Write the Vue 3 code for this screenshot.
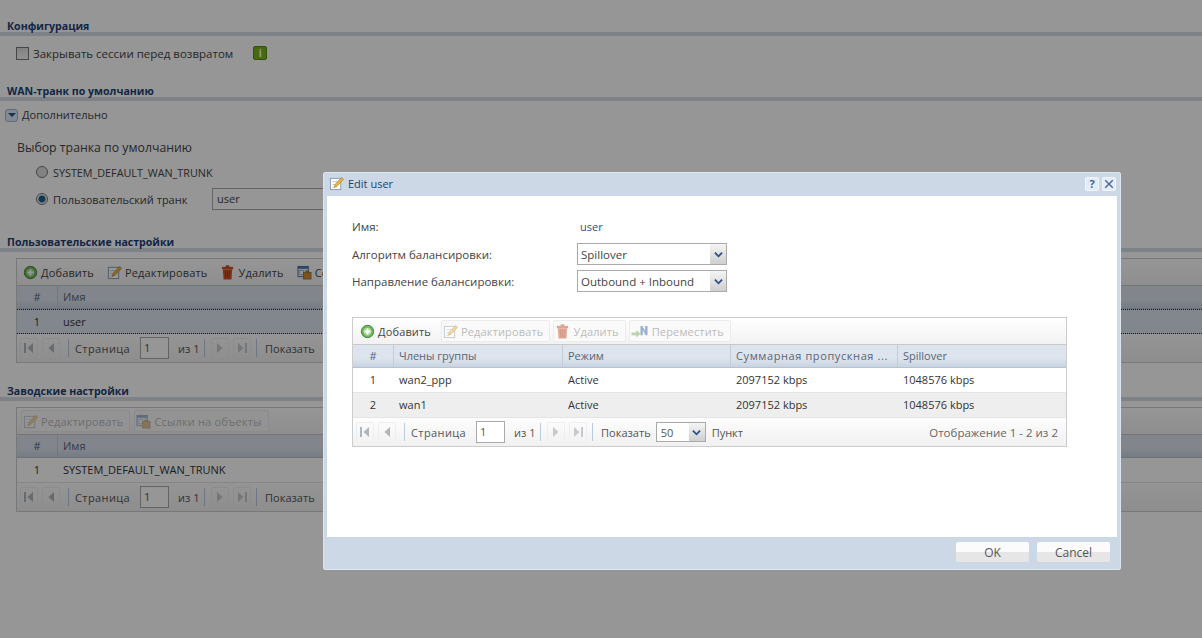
<script setup>
const modalColumns = ['Члены группы', 'Режим', 'Суммарная пропускная ...', 'Spillover']
const modalRows = [
  { id: 1, name: 'wan2_ppp', mode: 'Active', total: '2097152 kbps', spill: '1048576 kbps' },
  { id: 2, name: 'wan1', mode: 'Active', total: '2097152 kbps', spill: '1048576 kbps' }
]
</script>

<template>
  <div class="page">
    <svg class="defs" width="0" height="0">
      <symbol id="i-add" viewBox="0 0 16 16">
        <circle cx="8" cy="8" r="6.6" fill="#6fb05a" stroke="#3f8a3a" />
        <circle cx="8" cy="8" r="4.4" fill="#a5d68d" />
        <path d="M8 4.8v6.4M4.8 8h6.4" stroke="#fff" stroke-width="2" />
      </symbol>
      <symbol id="i-edit" viewBox="0 0 16 16">
        <rect x="1.5" y="2.5" width="11" height="12" fill="#fff" stroke="#8a9ab0" />
        <path d="M3.5 6h6M3.5 9h4M3.5 12h3" stroke="#c0c8d2" />
        <path d="M13.5 1.5l2 2-7 7.5-3 1 1-3z" fill="#edb53e" stroke="#a9791d" stroke-width=".7" />
      </symbol>
      <symbol id="i-del" viewBox="0 0 16 16">
        <path d="M6 0.500h4v1.500H6z" fill="#a33c1c" />
        <rect x="2" y="2" width="12" height="2.500" fill="#c9512a" />
        <path d="M3 4.500h10l-.8 11H3.800z" fill="#d4542a" />
        <path d="M6 6v8M8 6v8M10 6v8" stroke="#a33c1c" />
      </symbol>
      <symbol id="i-ref" viewBox="0 0 16 16">
        <rect x="1" y="1.5" width="11" height="11" fill="#dfe8f4" stroke="#4c72a8" />
        <rect x="1" y="1.5" width="11" height="2.5" fill="#4c72a8" />
        <rect x="3" y="6" width="4" height="4" fill="#fff" stroke="#8aa0c0" stroke-width=".7" />
        <rect x="7" y="8" width="8" height="7" fill="#cf8e35" stroke="#8f5f1d" stroke-width=".7" />
        <path d="M9.5 8V6.5h3V8" fill="none" stroke="#8f5f1d" />
      </symbol>
      <symbol id="i-move" viewBox="0 0 18 16">
        <path d="M0 9h5V6.500l4.500 4-4.500 4V12H0z" fill="#76b25a" />
        <path d="M9.500 2h2l3 5.500V2H17v10h-2l-3-5.500V12H9.500z" fill="#3d66a6" />
      </symbol>
      <symbol id="i-first" viewBox="0 0 14 14">
        <rect x="2" y="2" width="2" height="10" fill="#aeb6bd" />
        <path d="M11 2v10L5.500 7z" fill="#aeb6bd" />
      </symbol>
      <symbol id="i-prev" viewBox="0 0 14 14">
        <path d="M10 2v10L4.500 7z" fill="#aeb6bd" />
      </symbol>
      <symbol id="i-next" viewBox="0 0 14 14">
        <path d="M4 2v10l5.500-5z" fill="#c4cad0" />
      </symbol>
      <symbol id="i-last" viewBox="0 0 14 14">
        <path d="M3 2v10l5.500-5z" fill="#c4cad0" />
        <rect x="10" y="2" width="2" height="10" fill="#c4cad0" />
      </symbol>
    </svg>

    <main class="back">
      <h2 class="section-title first">Конфигурация</h2>
      <div class="check-row">
        <span class="checkbox"></span>
        <span>Закрывать сессии перед возвратом</span>
        <span class="info">i</span>
      </div>

      <h2 class="section-title wan">WAN-транк по умолчанию</h2>
      <div class="advanced">
        <span class="adv-btn"><i></i></span>
        <span class="adv-text">Дополнительно</span>
      </div>
      <div class="choose">Выбор транка по умолчанию</div>
      <div class="radio-row top">
        <span class="radio"></span>
        <span class="trunk">SYSTEM_DEFAULT_WAN_TRUNK</span>
      </div>
      <div class="radio-row">
        <span class="radio on"></span>
        <span class="radio-label">Пользовательский транк</span>
        <span class="text-input">user</span>
      </div>

      <h2 class="section-title user">Пользовательские настройки</h2>
      <section class="back-grid">
        <div class="toolbar">
          <span class="tool"><svg><use href="#i-add" /></svg>Добавить</span>
          <span class="tool"><svg><use href="#i-edit" /></svg>Редактировать</span>
          <span class="tool"><svg><use href="#i-del" /></svg>Удалить</span>
          <span class="tool"><svg><use href="#i-ref" /></svg>Ссылки на объекты</span>
        </div>
        <div class="head back-cols">
          <span class="num">#</span>
          <span>Имя</span>
        </div>
        <div class="row back-cols selected">
          <span class="num">1</span>
          <span>user</span>
        </div>
        <div class="pager">
          <span class="pg"><svg><use href="#i-first" /></svg></span>
          <span class="pg"><svg><use href="#i-prev" /></svg></span>
          <span class="sep"></span>
          <span class="pg-page">Страница</span>
          <span class="pg-input">1</span>
          <span class="pg-of">из 1</span>
          <span class="sep after-of"></span>
          <span class="pg"><svg><use href="#i-next" /></svg></span>
          <span class="pg"><svg><use href="#i-last" /></svg></span>
          <span class="sep tight"></span>
          <span class="pg-text">Показать</span>
        </div>
      </section>

      <h2 class="section-title factory">Заводские настройки</h2>
      <section class="back-grid">
        <div class="toolbar">
          <span class="tool boxed off"><svg><use href="#i-edit" /></svg>Редактировать</span>
          <span class="tool boxed off"><svg><use href="#i-ref" /></svg>Ссылки на объекты</span>
        </div>
        <div class="head back-cols">
          <span class="num">#</span>
          <span>Имя</span>
        </div>
        <div class="row back-cols">
          <span class="num">1</span>
          <span>SYSTEM_DEFAULT_WAN_TRUNK</span>
        </div>
        <div class="pager">
          <span class="pg"><svg><use href="#i-first" /></svg></span>
          <span class="pg"><svg><use href="#i-prev" /></svg></span>
          <span class="sep"></span>
          <span class="pg-page">Страница</span>
          <span class="pg-input">1</span>
          <span class="pg-of">из 1</span>
          <span class="sep after-of"></span>
          <span class="pg"><svg><use href="#i-next" /></svg></span>
          <span class="pg"><svg><use href="#i-last" /></svg></span>
          <span class="sep tight"></span>
          <span class="pg-text">Показать</span>
        </div>
      </section>
    </main>

    <div class="overlay"></div>

    <div class="modal">
      <header class="modal-title">
        <svg class="title-icon"><use href="#i-edit" /></svg>
        <span class="title-text">Edit user</span>
        <span class="win-btn help">?</span>
        <span class="win-btn close">
          <svg viewBox="0 0 12 12"><path d="M1.500 1.500l9 9M10.500 1.500l-9 9" stroke="#3f6495" stroke-width="1.600" /></svg>
        </span>
      </header>

      <div class="modal-body">
        <div class="form-row name">
          <label>Имя:</label>
          <span class="value">user</span>
        </div>
        <div class="form-row algo">
          <label>Алгоритм балансировки:</label>
          <span class="select">
            <span class="select-text">Spillover</span>
            <span class="select-arrow"><svg viewBox="0 0 10 10"><path d="M1 3l4 4 4-4" fill="none" stroke="#27508c" stroke-width="2" /></svg></span>
          </span>
        </div>
        <div class="form-row dir">
          <label>Направление балансировки:</label>
          <span class="select">
            <span class="select-text">Outbound + Inbound</span>
            <span class="select-arrow"><svg viewBox="0 0 10 10"><path d="M1 3l4 4 4-4" fill="none" stroke="#27508c" stroke-width="2" /></svg></span>
          </span>
        </div>

        <section class="grid">
          <div class="toolbar">
            <span class="tool"><svg><use href="#i-add" /></svg>Добавить</span>
            <span class="tool boxed off"><svg><use href="#i-edit" /></svg>Редактировать</span>
            <span class="tool boxed off"><svg><use href="#i-del" /></svg>Удалить</span>
            <span class="tool boxed off wide"><svg><use href="#i-move" /></svg>Переместить</span>
          </div>
          <div class="head cols">
            <span class="num">#</span>
            <span v-for="col in modalColumns" :key="col">{{ col }}</span>
          </div>
          <div v-for="r in modalRows" :key="r.id" class="row cols" :class="{ alt: r.id === 2 }">
            <span class="num">{{ r.id }}</span>
            <span>{{ r.name }}</span>
            <span>{{ r.mode }}</span>
            <span>{{ r.total }}</span>
            <span>{{ r.spill }}</span>
          </div>
          <div class="pager">
            <span class="pg"><svg><use href="#i-first" /></svg></span>
            <span class="pg"><svg><use href="#i-prev" /></svg></span>
            <span class="sep"></span>
            <span class="pg-page">Страница</span>
            <span class="pg-input">1</span>
            <span class="pg-of">из 1</span>
            <span class="sep after-of"></span>
            <span class="pg"><svg><use href="#i-next" /></svg></span>
            <span class="pg"><svg><use href="#i-last" /></svg></span>
            <span class="sep tight"></span>
            <span class="pg-text">Показать</span>
            <span class="mini-select">
              <span>50</span>
              <span class="select-arrow"><svg viewBox="0 0 10 10"><path d="M1 3l4 4 4-4" fill="none" stroke="#27508c" stroke-width="2" /></svg></span>
            </span>
            <span class="pg-text">Пункт</span>
            <span class="pg-total">Отображение 1 - 2 из 2</span>
          </div>
        </section>
      </div>

      <footer class="modal-foot">
        <button class="btn">OK</button>
        <button class="btn">Cancel</button>
      </footer>
    </div>
  </div>
</template>

<style>
html, body {
  margin: 0;
  background: #fff;
}
</style>

<style scoped>
.page {
  position: relative;
  width: 1202px;
  height: 638px;
  overflow: hidden;
  background: #fff;
  font-family: "Open Sans", "Noto Sans", "DejaVu Sans", sans-serif;
  font-size: 11px;
  color: #444;
}

.defs {
  position: absolute;
}

.back {
  display: flow-root;
}

.section-title {
  margin: 0;
  padding: 0 0 0 7px;
  height: 14px;
  line-height: 17px;
  font-size: 10.6px;
  font-weight: 700;
  color: #1d3f73;
  border-bottom: 4px solid #d6dbe4;
  box-sizing: content-box;
}

.first { margin-top: 18px; }
.wan { margin-top: 22px; }
.user { margin-top: 24px; }
.factory { margin-top: 20px; }

.check-row {
  display: flex;
  align-items: center;
  height: 16px;
  margin-top: 9px;
  padding-left: 16px;
  font-size: 11.5px;
}

.checkbox {
  width: 11px;
  height: 11px;
  margin-right: 4px;
  border: 1px solid #777;
  background: linear-gradient(#ddd, #f6f6f6);
}

.info {
  width: 14px;
  height: 14px;
  margin-left: 20px;
  border-radius: 2px;
  background: #7ab51d;
  border: 1px solid #5c8c12;
  box-sizing: border-box;
  color: #fff;
  font-weight: 700;
  font-size: 10px;
  line-height: 12px;
  text-align: center;
}

.advanced {
  display: flex;
  align-items: center;
  height: 14px;
  margin-top: 7px;
  padding-left: 5px;
  gap: 4px;
}

.adv-text {
  line-height: 14px;
  height: 14px;
}

.adv-btn {
  display: flex;
  align-items: center;
  justify-content: center;
  width: 13px;
  height: 13px;
  box-sizing: border-box;
  border: 1px solid #9db4d4;
  border-radius: 3px;
  background: #dfe9f6;
}

.adv-btn i {
  width: 0;
  height: 0;
  border-left: 4px solid transparent;
  border-right: 4px solid transparent;
  border-top: 4px solid #27508c;
}

.choose {
  margin-top: 18px;
  padding-left: 17px;
  font-size: 12.3px;
  line-height: 16px;
}

.radio-row {
  display: flex;
  align-items: center;
  height: 22px;
  padding-left: 36px;
}

.radio-row.top {
  margin-top: 5px;
  margin-bottom: 5px;
}

.trunk {
  font-size: 10.8px;
}

.radio {
  width: 10px;
  height: 10px;
  margin-right: 5px;
  border-radius: 50%;
  border: 1px solid #777;
  background: #ddd;
}

.radio.on {
  background: radial-gradient(circle, #1c5f8f 0 3px, #eee 4px);
}

.radio-label {
  width: 159px;
}

.text-input {
  width: 300px;
  height: 20px;
  line-height: 20px;
  padding-left: 4px;
  border: 1px solid #aaa;
  background: #fff;
}

.back-grid {
  margin: 6px 0 0 16px;
  border: 1px solid #ccc;
  border-right: 0;
}

.back-cols {
  display: grid;
  grid-template-columns: 40px 1fr;
}

.toolbar {
  display: flex;
  align-items: center;
  gap: 3px;
  height: 26px;
  padding-left: 5px;
  background: linear-gradient(#fff, #f2f2f2);
}

.back-grid .toolbar {
  gap: 4px;
  padding-left: 4px;
}

.tool {
  display: flex;
  align-items: center;
  gap: 3px;
  height: 20px;
  padding: 0 6px 0 1px;
  border: 1px solid transparent;
  white-space: nowrap;
  letter-spacing: 0.15px;
}

.tool svg {
  width: 15px;
  height: 15px;
  flex: none;
}

.tool.wide svg {
  width: 18px;
}

.tool.boxed {
  border-color: #ececec;
  border-radius: 2px;
  background: #fafafa;
}

.tool.off {
  color: #bbb;
}

.tool.off svg {
  opacity: 0.5;
}

.head {
  align-items: center;
  height: 24px;
  background: linear-gradient(#dde4ee 0 60%, #c9d3e0);
  border-top: 1px solid #c8c8c8;
  border-bottom: 1px solid #b7c2d2;
  box-sizing: border-box;
  color: #5a6472;
}

.head span {
  height: 100%;
  line-height: 22px;
  padding-left: 5px;
  border-left: 1px solid #c2ccd9;
}

.head .num,
.row .num {
  padding-left: 0;
  border-left: 0;
  text-align: center;
}

/* the long column title runs wider than the others in the original */
.cols.head span:nth-child(4) {
  letter-spacing: 0.6px;
}

.row {
  align-items: start;
  height: 25px;
  line-height: 23px;
  background: #fff;
  color: #333;
  box-sizing: border-box;
  border-bottom: 1px solid #e4e4e4;
}

.row span {
  padding-left: 6px;
}

.row.alt {
  background: #eee;
}

.row.selected {
  background: #dde4f0;
  border-top: 1px dotted #222;
  border-bottom: 1px dotted #222;
}

.pager {
  display: flex;
  align-items: center;
  height: 28px;
  padding-left: 3px;
  background: linear-gradient(#fdfdfd, #f1f1f1);
  white-space: nowrap;
  color: #555;
}

.pg {
  display: flex;
  align-items: center;
  justify-content: center;
  width: 16px;
  height: 19px;
  margin-right: 4px;
  border: 1px solid #efefef;
  border-radius: 2px;
}

.pg svg {
  width: 14px;
  height: 14px;
}

.sep {
  width: 1px;
  height: 18px;
  margin: 0 6px 0 4px;
  background: #b9cbe0;
}

.sep.after-of {
  margin-left: 0;
}

.sep.tight {
  margin: 0 8px 0 1px;
}

.pg-page {
  letter-spacing: 0.4px;
}

.pg-input {
  width: 24px;
  height: 20px;
  line-height: 20px;
  margin: 0 9px 0 10px;
  padding-left: 3px;
  border: 1px solid #aaa;
  background: #fff;
}

.pg-of {
  width: 26px;
}

.mini-select {
  display: flex;
  align-items: center;
  justify-content: space-between;
  width: 50px;
  height: 20px;
  margin: 0 6px 0 5px;
  padding-left: 4px;
  box-sizing: border-box;
  border: 1px solid #aaa;
  background: #fff;
}

.mini-select .select-arrow {
  width: 16px;
}

.pg-total {
  margin-left: auto;
  margin-right: 8px;
  font-size: 11.5px;
  color: #666;
}

.overlay {
  position: absolute;
  inset: 0;
  background: rgba(0, 0, 0, 0.41);
}

.modal {
  position: absolute;
  left: 323px;
  top: 172px;
  width: 798px;
  height: 398px;
  display: flex;
  flex-direction: column;
  box-sizing: border-box;
  padding: 0 4px 4px;
  background: #ccd8e6;
  border-radius: 3px;
  box-shadow: 0 0 0 1px #dde5ee inset;
}

.modal-title {
  display: flex;
  align-items: center;
  height: 24px;
  padding-bottom: 1px;
  box-sizing: border-box;
  flex: none;
}

.title-icon {
  width: 15px;
  height: 15px;
  margin: 0 4px 0 2px;
}

.title-text {
  flex: 1;
  color: #1d3f73;
  font-size: 11px;
}

.win-btn {
  display: flex;
  align-items: center;
  justify-content: center;
  width: 14px;
  height: 14px;
  box-sizing: border-box;
  margin-right: 3px;
  border: 1px solid #f1f6fb;
  border-radius: 2px;
  background: #e4edf7;
}

.win-btn.close {
  margin-right: 1px;
}

.help {
  color: #3f6495;
  font-weight: 700;
  font-size: 11px;
}

.close svg {
  width: 10px;
  height: 10px;
}

.modal-body {
  flex: 1;
  padding: 21px 25px 0;
  background: #fff;
  font-size: 11.5px;
}

.form-row {
  display: flex;
  align-items: center;
  height: 22px;
  margin-bottom: 5px;
}

.form-row.name {
  height: 18px;
  margin-bottom: 8px;
}

.form-row label {
  width: 225px;
  color: #444;
}

.value {
  padding-left: 3px;
  font-size: 11px;
  color: #2b4f87;
}

.select {
  display: flex;
  align-items: center;
  justify-content: space-between;
  width: 150px;
  height: 22px;
  box-sizing: border-box;
  padding-left: 3px;
  border: 1px solid #aaa;
  background: #fff;
}

.select-arrow {
  display: flex;
  align-items: center;
  justify-content: center;
  width: 16px;
  height: 100%;
  background: linear-gradient(#f5f5f5, #cfcfcf);
}

.select-arrow svg {
  width: 9px;
  height: 9px;
}

.grid {
  width: 715px;
  margin-top: 25px;
  border: 1px solid #ccc;
  box-sizing: border-box;
  font-size: 11px;
}

.cols {
  display: grid;
  grid-template-columns: 40px 169px 168px 167px 1fr;
}

.modal-foot {
  display: flex;
  justify-content: flex-end;
  align-items: center;
  gap: 8px;
  flex: none;
  height: 29px;
  padding-right: 7px;
}

.btn {
  width: 73px;
  height: 20px;
  padding: 1px 0 0;
  border: 0;
  border-radius: 2px;
  font: inherit;
  font-size: 12px;
  color: #555;
  background: linear-gradient(#fbfbfb 0 50%, #e6e6e6 50%);
}
</style>
